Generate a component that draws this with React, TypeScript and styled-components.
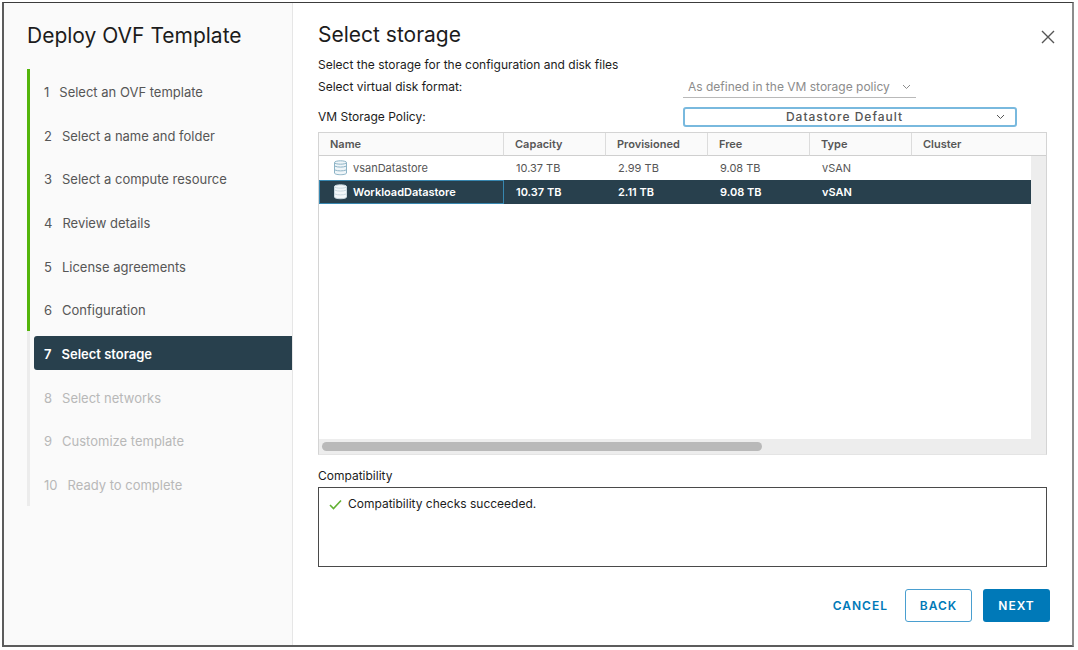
import React from "react";
import styled, { createGlobalStyle, css } from "styled-components";

const GlobalStyle = createGlobalStyle`
  *, *::before, *::after { box-sizing: border-box; }
  body {
    margin: 0;
    background: #fff;
    color: #1c1c1c;
    font-family: Inter, "Open Sans", "Liberation Sans", sans-serif;
    font-size: 12px;
    line-height: 16px;
  }
  button, select { font: inherit; }
`;

const Dialog = styled.div`
  display: flex;
  min-height: calc(100vh - 5px);
  margin: 2px 4px 3px 2px;
  border: 2px solid #5c5c5c;
  border-top: 1px solid #3c3c3c;
  border-right-color: #8c8c8c;
`;

const Sidebar = styled.aside`
  flex: 0 0 289px;
  padding: 19px 0 0 23px;
  background: #fafafa;
  border-right: 1px solid #e6e6e6;
`;

const Title = styled.h1`
  margin: 0;
  font-size: 21px;
  line-height: 28px;
  font-weight: 400;
`;

const Steps = styled.ol`
  display: grid;
  grid-template-rows: repeat(10, 1fr);
  height: 437px;
  margin: 19px 0 0;
  padding: 0;
  list-style: none;
`;

type StepState = "done" | "active" | "todo";

const Step = styled.li<{ $state: StepState }>`
  display: flex;
  align-items: center;
  padding-left: 4px;
  border-left: 3px solid ${(p) => (p.$state === "done" ? "#54b50b" : "#ececec")};
`;

const StepButton = styled.button<{ $state: StepState }>`
  display: flex;
  flex: 1;
  align-items: center;
  gap: 10px;
  height: 34px;
  padding: 2px 10px 0;
  border: 0;
  border-radius: 3px 0 0 3px;
  background: none;
  color: ${(p) => (p.$state === "todo" ? "#b8b8b8" : "#565656")};
  font-size: 13px;
  text-align: left;
  ${(p) =>
    p.$state === "active" &&
    css`
      background: #28404d;
      color: #fff;
      font-weight: 600;
    `}
`;

const Main = styled.main`
  display: flex;
  flex: 1;
  flex-direction: column;
  min-width: 0;
  padding: 18px 22px 23px 25px;
`;

const Header = styled.header`
  display: flex;
  align-items: center;
  justify-content: space-between;
  margin-right: -10px;
`;

const CloseButton = styled.button`
  display: grid;
  place-items: center;
  width: 24px;
  height: 24px;
  margin-top: 4px;
  padding: 0;
  border: 0;
  background: none;
  color: #555;
`;

const Content = styled.div`
  display: flex;
  flex: 1;
  flex-direction: column;
  padding: 8px 3px 0 0;
`;

const Intro = styled.p`
  margin: 0 0 3px;
`;

const Field = styled.div<{ $height: number; $gap: number }>`
  display: grid;
  grid-template-columns: 1fr 364px;
  align-items: center;
  height: ${(p) => p.$height}px;
  margin-bottom: ${(p) => p.$gap}px;
`;

const SelectBox = styled.div<{ $outlined?: boolean }>`
  display: grid;
  grid-template-columns: 1fr auto;
  align-items: center;
  width: ${(p) => (p.$outlined ? 334 : 233)}px;
  height: 100%;
  color: ${(p) => (p.$outlined ? "#555" : "#8c8c8c")};
  ${(p) =>
    p.$outlined
      ? css`
          border: 2px solid #79b9de;
          border-radius: 3px;
        `
      : css`
          border-bottom: 1px solid #b9b9b9;
        `}

  select {
    grid-area: 1 / 1 / 2 / 3;
    width: 100%;
    padding: 0 12px 0 5px;
    border: 0;
    outline: 0;
    appearance: none;
    background: none;
    color: inherit;
    opacity: 1;
    line-height: 16px;
    ${(p) =>
      p.$outlined &&
      css`
        padding-right: 16px;
        font-weight: 500;
        letter-spacing: 1px;
        text-align-last: center;
      `}
  }

  svg {
    grid-area: 1 / 2 / 2 / 3;
    margin-right: ${(p) => (p.$outlined ? 10 : 5)}px;
    pointer-events: none;
  }
`;

const DataGrid = styled.div`
  display: flex;
  flex: 1;
  flex-direction: column;
  border: 1px solid #d4d4d4;
  border-bottom-color: #e4e4e4;
`;

const GridBody = styled.div`
  display: flex;
  flex: 1;
`;

const Table = styled.table`
  width: 100%;
  border-collapse: separate;
  border-spacing: 0;
  table-layout: fixed;
  color: #565656;
  font-size: 11px;

  th {
    height: 23px;
    padding: 0 0 0 11px;
    border-right: 1px solid #dcdcdc;
    border-bottom: 1px solid #cfcfcf;
    background: #fafafa;
    font-weight: 600;
    text-align: left;
  }
  th:last-child { border-right: 0; }
`;

const Row = styled.tr<{ $selected?: boolean }>`
  td {
    height: 24px;
    padding: 0 0 0 12px;
    ${(p) =>
      p.$selected &&
      css`
        background: #28404d;
        color: #fff;
        font-weight: 600;
      `}
  }
  td:first-child {
    padding-left: ${(p) => (p.$selected ? 13 : 14)}px;
    ${(p) => p.$selected && css`border: 1px solid #3787b0;`}
  }
  td:last-child { background: #ededed; }
`;

const NameCell = styled.span`
  display: flex;
  align-items: center;
  gap: 5px;
`;

const Blank = styled.div`
  flex: 1;
`;

const VerticalTrack = styled.div`
  width: 15px;
  background: #ededed;
`;

const HorizontalTrack = styled.div`
  height: 15px;
  padding: 3px;
  background: #ededed;
`;

const Thumb = styled.div`
  width: 61%;
  height: 9px;
  border-radius: 5px;
  background: #b9b9b9;
`;

const SectionLabel = styled.h2`
  margin: 12px 0 3px;
  font-size: 12px;
  line-height: 17px;
  font-weight: 400;
`;

const Result = styled.div`
  display: flex;
  align-items: flex-start;
  gap: 6px;
  height: 80px;
  padding: 8px 10px;
  border: 1px solid #4a4a4a;
`;

const Footer = styled.footer`
  display: flex;
  justify-content: flex-end;
  gap: 11px;
  margin-top: 22px;
`;

const Button = styled.button<{ $kind: "link" | "outline" | "primary" }>`
  min-width: ${(p) => (p.$kind === "link" ? 0 : 67)}px;
  height: 33px;
  padding: 1px 5px 0;
  border: 1px solid ${(p) => (p.$kind === "outline" ? "#4a9fd0" : "transparent")};
  border-radius: 3px;
  background: ${(p) => (p.$kind === "primary" ? "#0079b8" : "none")};
  color: ${(p) => (p.$kind === "primary" ? "#fff" : "#0079b8")};
  font-weight: 600;
  letter-spacing: 1px;
`;

const Chevron = () => (
  <svg width="9" height="6" viewBox="0 0 9 6" fill="none" stroke="currentColor" aria-hidden="true">
    <path d="M1 1l3.5 3.5L8 1" />
  </svg>
);

const DatastoreIcon = ({ filled }: { filled?: boolean }) => (
  <svg
    width="15"
    height="16"
    viewBox="0 0 15 16"
    fill={filled ? "#f2f7f9" : "#f0f6f9"}
    stroke={filled ? "#c9d8df" : "#8db3c6"}
    aria-hidden="true"
  >
    <path d="M1.500 2.500v10.500c0 1 2.500 1.700 6 1.700s6-.7 6-1.700V2.500" />
    <ellipse cx="7.500" cy="2.500" rx="6" ry="1.700" />
    <path d="M2 6.200c2.800 1.200 8.200 1.200 11 0M2 10c2.800 1.200 8.200 1.200 11 0" fill="none" />
  </svg>
);

const steps = [
  "Select an OVF template",
  "Select a name and folder",
  "Select a compute resource",
  "Review details",
  "License agreements",
  "Configuration",
  "Select storage",
  "Select networks",
  "Customize template",
  "Ready to complete",
];
const current = 6;

const datastores = [
  { name: "vsanDatastore", capacity: "10.37 TB", provisioned: "2.99 TB", free: "9.08 TB", type: "vSAN" },
  { name: "WorkloadDatastore", capacity: "10.37 TB", provisioned: "2.11 TB", free: "9.08 TB", type: "vSAN", selected: true },
];

export default function App() {
  return (
    <>
      <GlobalStyle />
      <Dialog role="dialog" aria-labelledby="wizard-title">
        <Sidebar>
          <Title id="wizard-title">Deploy OVF Template</Title>
          <Steps>
            {steps.map((label, i) => {
              const state: StepState = i < current ? "done" : i === current ? "active" : "todo";
              return (
                <Step key={label} $state={state}>
                  <StepButton type="button" $state={state} disabled={state === "todo"}>
                    <span>{i + 1}</span>
                    <span>{label}</span>
                  </StepButton>
                </Step>
              );
            })}
          </Steps>
        </Sidebar>
        <Main>
          <Header>
            <Title as="h2">Select storage</Title>
            <CloseButton type="button" aria-label="Close">
              <svg width="14" height="14" viewBox="0 0 14 14" stroke="currentColor" strokeWidth="1.400" aria-hidden="true">
                <path d="M1 1l12 12M13 1L1 13" />
              </svg>
            </CloseButton>
          </Header>
          <Content>
            <Intro>Select the storage for the configuration and disk files</Intro>
            <Field $height={22} $gap={9}>
              <label htmlFor="disk-format">Select virtual disk format:</label>
              <SelectBox>
                <select id="disk-format" disabled>
                  <option>As defined in the VM storage policy</option>
                </select>
                <Chevron />
              </SelectBox>
            </Field>
            <Field $height={20} $gap={5}>
              <label htmlFor="storage-policy">VM Storage Policy:</label>
              <SelectBox $outlined>
                <select id="storage-policy">
                  <option>Datastore Default</option>
                </select>
                <Chevron />
              </SelectBox>
            </Field>
            <DataGrid>
              <Table>
                <colgroup>
                  <col width="185" />
                  <col width="102" />
                  <col width="102" />
                  <col width="102" />
                  <col width="102" />
                  <col />
                  <col width="15" />
                </colgroup>
                <thead>
                  <tr>
                    <th>Name</th>
                    <th>Capacity</th>
                    <th>Provisioned</th>
                    <th>Free</th>
                    <th>Type</th>
                    <th colSpan={2}>Cluster</th>
                  </tr>
                </thead>
                <tbody>
                  {datastores.map((d) => (
                    <Row key={d.name} $selected={d.selected}>
                      <td>
                        <NameCell>
                          <DatastoreIcon filled={d.selected} />
                          {d.name}
                        </NameCell>
                      </td>
                      <td>{d.capacity}</td>
                      <td>{d.provisioned}</td>
                      <td>{d.free}</td>
                      <td>{d.type}</td>
                      <td />
                      <td />
                    </Row>
                  ))}
                </tbody>
              </Table>
              <GridBody>
                <Blank />
                <VerticalTrack />
              </GridBody>
              <HorizontalTrack>
                <Thumb />
              </HorizontalTrack>
            </DataGrid>
            <SectionLabel>Compatibility</SectionLabel>
            <Result>
              <svg width="13" height="16" viewBox="0 0 13 16" fill="none" stroke="#62b132" strokeWidth="1.600" aria-hidden="true">
                <path d="M1 9l3.500 3.500L12 4.500" />
              </svg>
              <span>Compatibility checks succeeded.</span>
            </Result>
          </Content>
          <Footer>
            <Button type="button" $kind="link">CANCEL</Button>
            <Button type="button" $kind="outline">BACK</Button>
            <Button type="button" $kind="primary">NEXT</Button>
          </Footer>
        </Main>
      </Dialog>
    </>
  );
}
